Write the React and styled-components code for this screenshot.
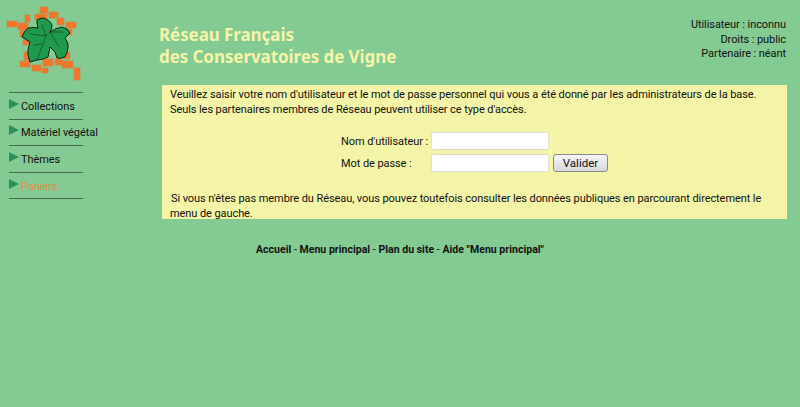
import React from "react";
import styled, { createGlobalStyle } from "styled-components";

const GlobalStyle = createGlobalStyle`
  html, body {
    margin: 0;
    padding: 0;
    background: #84ca93;
  }
  body {
    font-family: Roboto, "Noto Sans", sans-serif;
    font-size: 11px;
    letter-spacing: -0.08px;
    color: #111;
  }
`;

const BRICKS = [
  [7, 21, 10, 6], [18, 23, 10, 7], [25, 15, 5, 7], [40, 7, 8, 6], [35, 14, 12, 6],
  [49, 12, 9, 6], [57, 18, 7, 7], [66, 22, 10, 6], [20, 31, 6, 6], [23, 40, 6, 5],
  [66, 29, 6, 6], [24, 52, 6, 8], [20, 61, 10, 6], [32, 65, 9, 6], [43, 59, 10, 7],
  [42, 68, 6, 5], [55, 59, 7, 6], [62, 61, 11, 7], [64, 52, 6, 7], [74, 68, 6, 12],
];

const Logo = () => (
  <svg width="90" height="85" viewBox="0 0 90 85">
    {BRICKS.map(([x, y, w, h], i) => (
      <rect key={i} x={x} y={y} width={w} height={h} fill="#f3752a" stroke="#c9894a" strokeWidth="0.7" />
    ))}
    <path
      d="M37 20 Q40 18 43 18 Q50 20 52 25 Q52 29 50 32 Q56 28 62 27 Q68 28 70 33 L65 38 Q69 43 68 48 Q67 54 65 57 Q60 59 57 58 L55 52 L50 47 L48 57 Q42 60 37 60 L30 62 Q27 55 28 50 L30 42 L22 37 Q24 31 28 28 Q33 27 38 28 L37 23 Z"
      fill="#1f9a4c"
      stroke="#10200f"
      strokeWidth="1"
      strokeLinejoin="round"
    />
    <path
      d="M50 32 L46 36 L37 60 M46 36 L30 34 M46 36 L42 25 M50 32 L59 47 M50 32 L63 32 M42 44 L34 45"
      fill="none"
      stroke="#123818"
      strokeWidth="0.6"
    />
  </svg>
);

const Arrow = () => (
  <ArrowIcon width="10" height="10" viewBox="0 0 10 10">
    <path d="M0 0 L10 5 L0 10 Z" fill="#2f8f5b" />
  </ArrowIcon>
);

const Page = styled.div`
  width: 800px;
  height: 407px;
  overflow: hidden;
`;

const Header = styled.header`
  display: flex;
  height: 85px;
`;

const LogoCell = styled.div`
  width: 159px;
`;

const Title = styled.h1`
  flex: 1;
  margin: 0;
  padding-top: 24px;
  font-family: "Noto Sans", sans-serif;
  font-size: 17px;
  letter-spacing: -0.08px;
  line-height: 22px;
  font-weight: bold;
  color: #f5f5a8;
`;

const Status = styled.div`
  padding: 18px 14px 0 0;
  text-align: right;
  line-height: 14.5px;
`;

const Body = styled.div`
  display: flex;
`;

const Sidebar = styled.nav`
  width: 162px;
  padding: 7px 0 0 9px;
  box-sizing: border-box;
`;

const MenuItem = styled.div`
  width: 74px;
  height: 26.6px;
  border-top: 1px solid #4e6a50;
  padding-top: 1px;
  box-sizing: border-box;
  display: flex;
  align-items: center;
  white-space: nowrap;
  color: ${(p) => (p.$active ? "#e8894a" : "#111")};
  &:last-child {
    height: 1px;
  }
`;

const ArrowIcon = styled.svg`
  flex: none;
  margin: -5px 2px 0 0;
`;

const Main = styled.main`
  width: 625px;
`;

const Panel = styled.section`
  height: 134px;
  background: #f4f4a8;
  padding: 2px 8px 0;
  box-sizing: border-box;
  line-height: 15px;
`;

const Intro = styled.p`
  margin: 0;
`;

const Notice = styled(Intro)`
  text-indent: 1px;
`;

const LoginForm = styled.form`
  display: grid;
  grid-template-columns: 90px 118px auto;
  row-gap: 4px;
  align-items: center;
  justify-content: start;
  margin: 15px 0 19px 171px;
`;

const Label = styled.label`
  white-space: nowrap;
`;

const Field = styled.input`
  width: 118px;
  height: 18px;
  box-sizing: border-box;
  border: 1px solid #e0e0d0;
  border-radius: 2px;
  background: #fff;
  padding: 0 2px;
`;

const Submit = styled.button`
  margin-left: 4px;
  width: 55px;
  height: 18px;
  padding: 0;
  border: 1px solid #8a8a8a;
  border-radius: 3px;
  background: linear-gradient(#f6f6f6, #d8d8d8);
  font: inherit;
  font-size: 11.5px;
  color: #111;
`;

const Footer = styled.footer`
  margin: 24px 0 0 0;
  text-align: center;
  font-size: 10.5px;
  letter-spacing: 0.03px;
  font-weight: bold;
  line-height: 14px;
`;

const Rest = styled.span`
  font-weight: normal;
`;

const MENU = ["Collections", "Matériel végétal", "Thèmes", "Paniers"];

export default function App() {
  return (
    <Page>
      <GlobalStyle />
      <Header>
        <LogoCell>
          <Logo />
        </LogoCell>
        <Title>
          Réseau Français
          <br />
          des Conservatoires de Vigne
        </Title>
        <Status>
          Utilisateur : inconnu
          <br />
          Droits : public
          <br />
          Partenaire : néant
        </Status>
      </Header>
      <Body>
        <Sidebar>
          {MENU.map((m) => (
            <MenuItem key={m} $active={m === "Paniers"}>
              <Arrow />
              {m}
            </MenuItem>
          ))}
          <MenuItem />
        </Sidebar>
        <Main>
          <Panel>
            <Intro>
              Veuillez saisir votre nom d'utilisateur et le mot de passe personnel qui vous a été donné par les administrateurs de la base.
              <br />
              Seuls les partenaires membres de Réseau peuvent utiliser ce type d'accès.
            </Intro>
            <LoginForm onSubmit={(e) => e.preventDefault()}>
              <Label>Nom d'utilisateur :</Label>
              <Field type="text" />
              <span />
              <Label>Mot de passe :</Label>
              <Field type="password" />
              <Submit type="submit">Valider</Submit>
            </LoginForm>
            <Notice>
              Si vous n'êtes pas membre du Réseau, vous pouvez toutefois consulter les données publiques en parcourant directement le menu de gauche.
            </Notice>
          </Panel>
        </Main>
      </Body>
      <Footer>
        Accueil <Rest>-</Rest> Menu principal <Rest>-</Rest> Plan du site <Rest>-</Rest> Aide "Menu principal"
      </Footer>
    </Page>
  );
}
